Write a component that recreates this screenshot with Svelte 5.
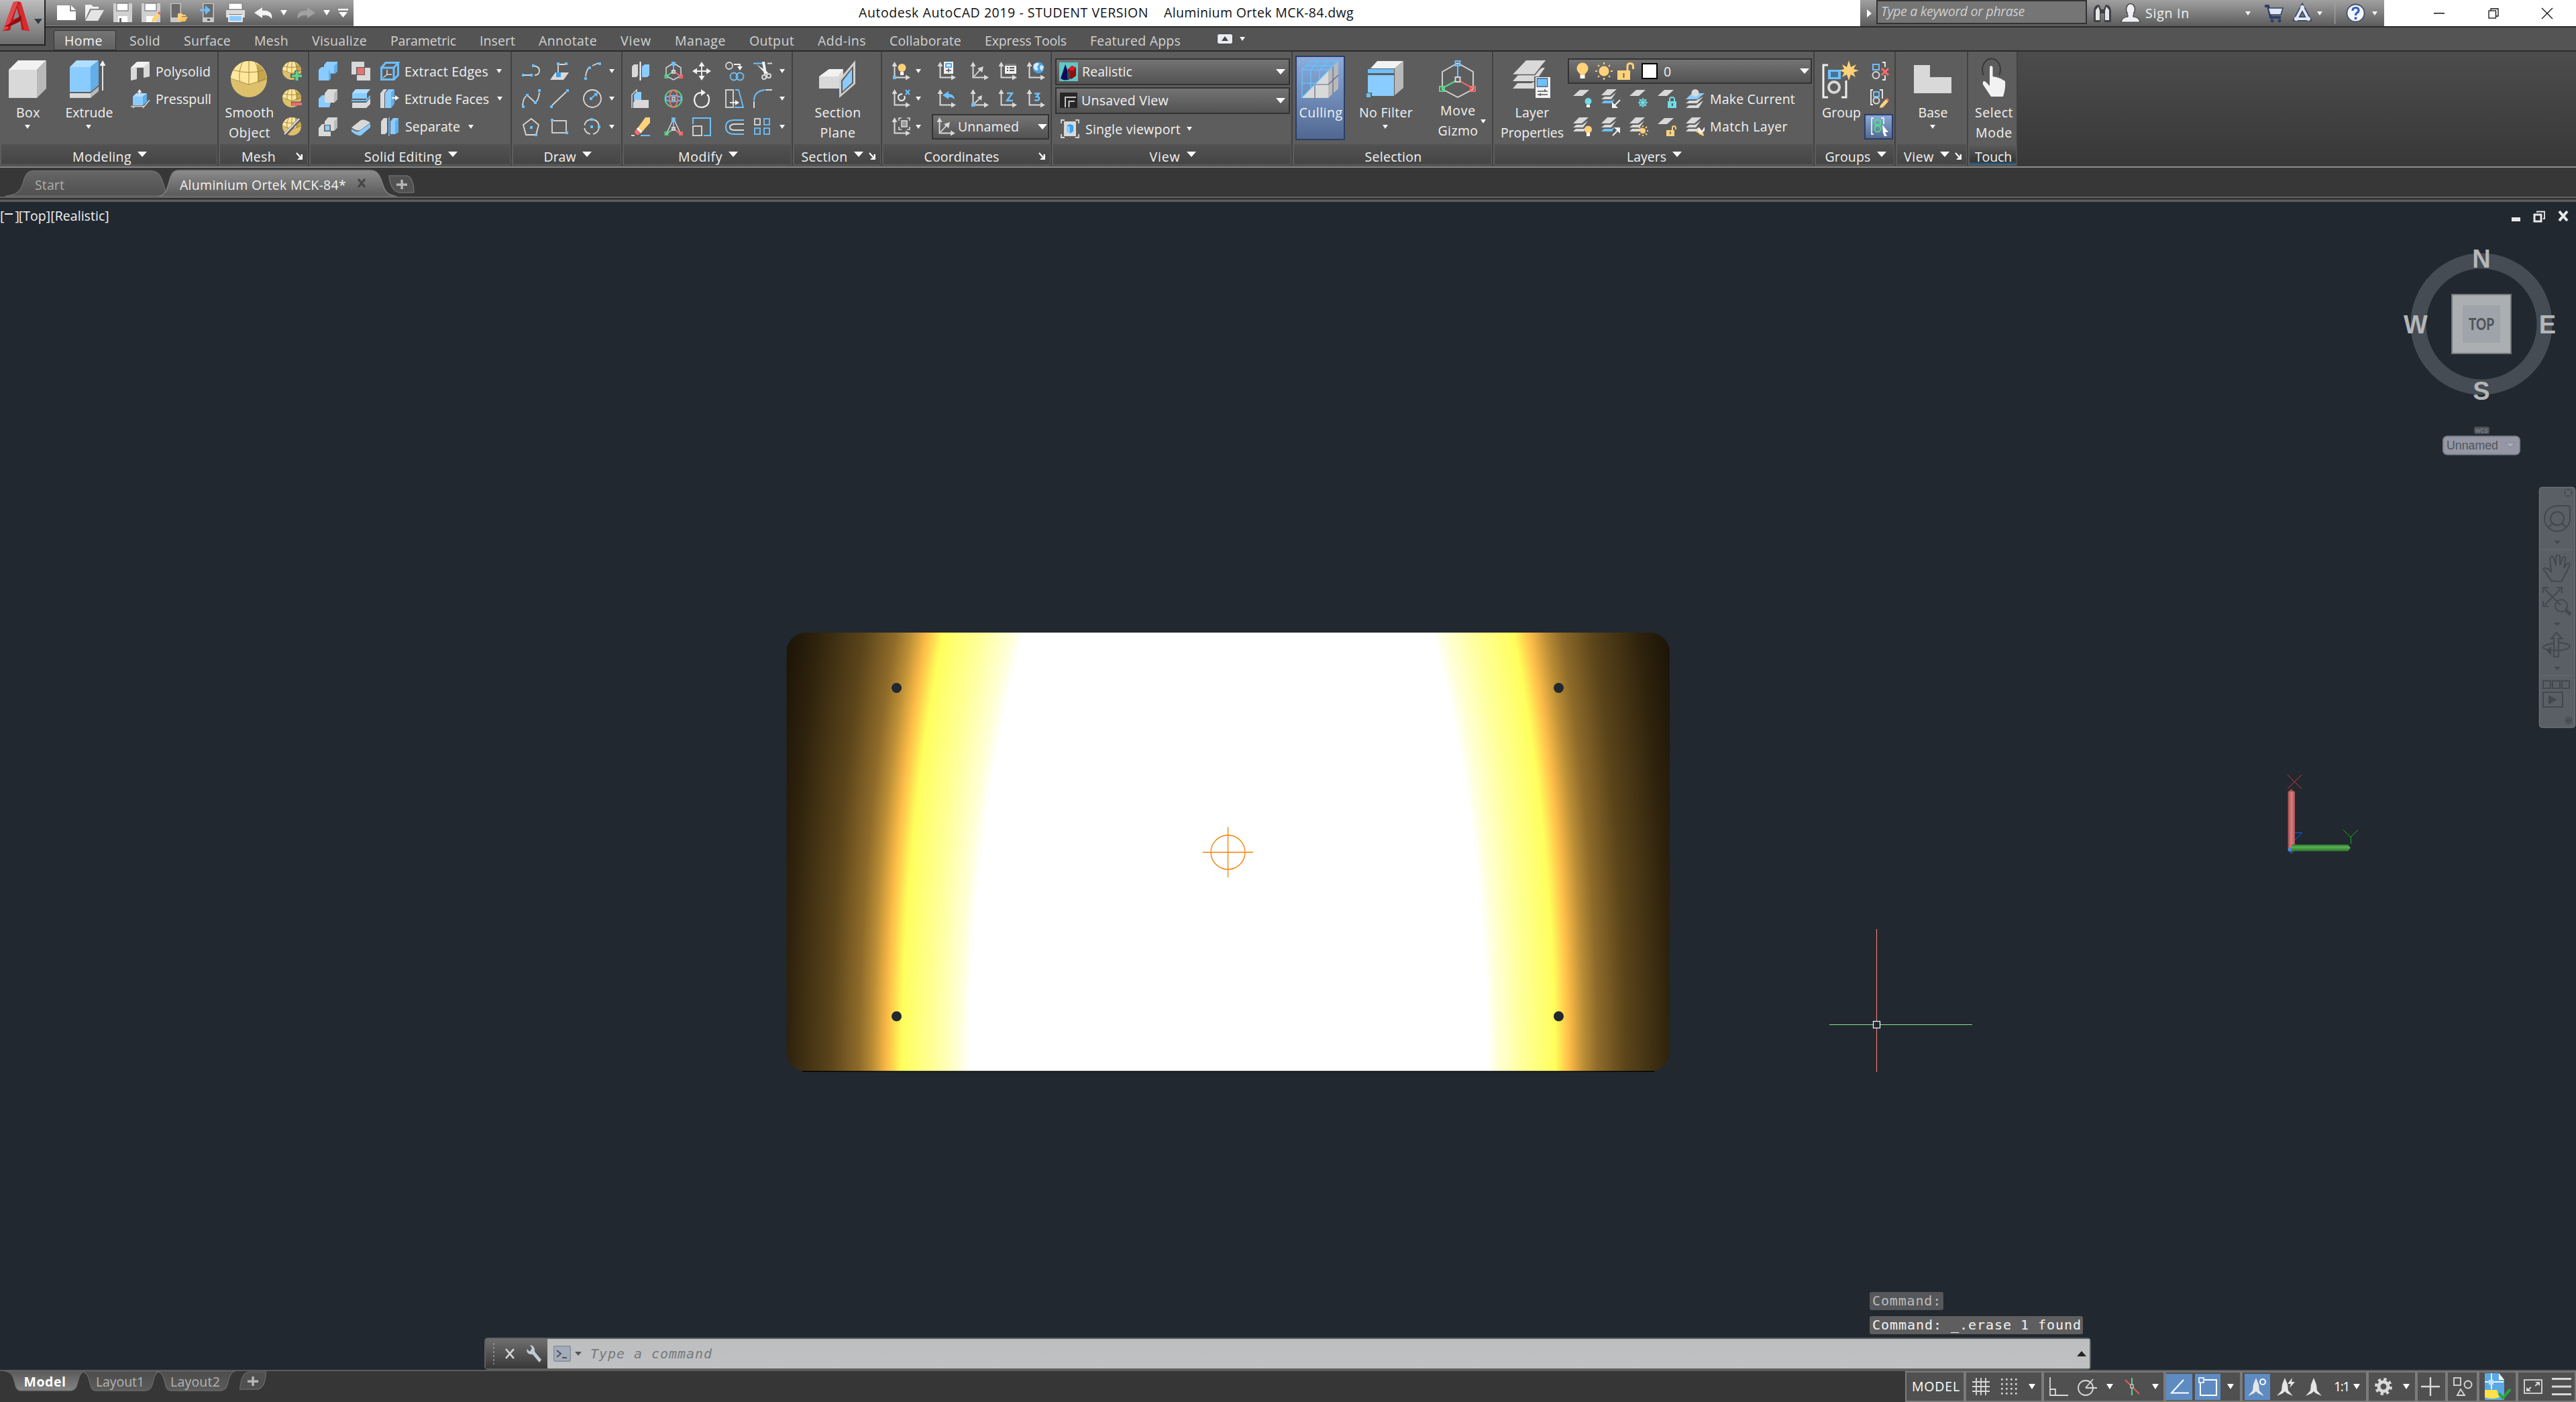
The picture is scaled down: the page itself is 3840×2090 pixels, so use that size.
<script>
  // ---------- drawing helpers ----------
  const P = (d, f) => `<path d="${d}" fill="${f}"/>`;
  const S = (d, s, w = 1.8) => `<path d="${d}" fill="none" stroke="${s}" stroke-width="${w}"/>`;
  const C = (x, y, r, f) => `<circle cx="${x}" cy="${y}" r="${r}" fill="${f}"/>`;
  const O = (x, y, r, s, w = 1.8) => `<circle cx="${x}" cy="${y}" r="${r}" fill="none" stroke="${s}" stroke-width="${w}"/>`;
  const R = (x, y, w, h, f) => `<rect x="${x}" y="${y}" width="${w}" height="${h}" fill="${f}"/>`;
  const Q = (x, y, w, h, s, sw = 1.8) => `<rect x="${x}" y="${y}" width="${w}" height="${h}" fill="none" stroke="${s}" stroke-width="${sw}"/>`;
  const dot = (x, y) => R(x - 2, y - 2, 4, 4, '#6cc0ff');

  const g = '#d9d9d9', wt = '#f2f2f2', dk = '#b9b9b9', b = '#8accff', lb = '#b0deff', db = '#62aee8';
  const l = '#6cc0ff', gr = '#58d888', rd = '#ff6b6b', ye = '#ffd27a', cy = '#6fdce6', bg = '#5d5d5d';

  const egg = (x, y, rx, ry) =>
    `<ellipse cx="${x}" cy="${y}" rx="${rx}" ry="${ry}" fill="#dcc06c"/>` +
    P(`M${x - rx} ${y}A${rx} ${ry} 0 0 1 ${x + rx} ${y}L${x} ${y + ry * 0.3}Z`, '#ffe79c') +
    P(`M${x + rx * 0.45} ${y - ry * 0.85}A${rx} ${ry} 0 0 1 ${x + rx} ${y}L${x + rx * 0.5} ${y + ry * 0.2}Z`, '#c4a64e') +
    S(`M${x - rx} ${y - 1}L${x} ${y + ry * 0.3}L${x + rx} ${y - 1}M${x - rx * 0.85} ${y - ry * 0.5}Q${x} ${y - ry * 0.25} ${x + rx * 0.85} ${y - ry * 0.5}M${x - rx * 0.35} ${y - ry * 0.95}Q${x - rx * 0.6} ${y - ry * 0.4} ${x - rx * 0.5} ${y + ry * 0.15}M${x + rx * 0.35} ${y - ry * 0.95}Q${x + rx * 0.6} ${y - ry * 0.4} ${x + rx * 0.5} ${y + ry * 0.15}M${x} ${y - ry}V${y + ry * 0.3}`, '#9c813a', 0.9);
  const axes = S('M4.5 5V23.5H23', g, 2) + P('M4.5 0L8.5 7H.5ZM28 23.5L21 19.5V27.5Z', g);
  const para = (x, y, f = g) => P(`M${x} ${y + 9}L${x + 10} ${y}H${x + 24}L${x + 14} ${y + 9}Z`, f);
  const sheets = (last) =>
    P('M0 21L4 17H16L20 14L16 21Z', last || g) + P('M0 15L5 11H14L22 5L15 15Z', g) + P('M0 9L9 0H23L13 9Z', g);
  const arrowA = P('M13 0L17 10L18 19L25 27L16 23L13 20L10 23L1 27L8 19L9 10Z', '#e6e6e6');

  // name: [width, height, markup]
  const icons = {
    tri: [8, 6, P('M0 0H8L4 6Z', '#f5f5f5')],
    triB: [14, 8, P('M0 0H14L7 8Z', '#fff')],
    triM: [10, 8, P('M0 0H10L5 8Z', '#fff')],
    triD: [10, 6, P('M0 0H10L5 6Z', '#555')],
    launch: [10, 11, S('M1 1L8 9', '#fff', 2) + P('M10 3V11H2L4.500 8.500H7.500V3Z', '#fff')],
    logo: [46, 52, P('M17 3Q24 -1 30 3L44 50L31 48L29 34L14 41L12 49L0 50Z', '#c4161c') + P('M23 12L17 31L27 27Z', '#888') + P('M17 3Q24 -1 25 3L8 46L0 50Z', '#e2474b') + P('M30 3L44 50L36 49L24 8Z', '#d92a30') + P('M2 43Q16 36 30 24L31 32Q18 40 10 42Z', '#8e0d12')],
    fnew: [28, 22, P('M0 0H19V9H28V22H0Z', '#fff') + P('M21 0L28 7H21Z', '#fff')],
    fopen: [28, 24, P('M0 0H9L12 3H20V6H7L0 22Z', '#f0f0f0') + P('M9 8H28L19 24H0Z', '#e4e4e4')],
    save: [28, 28, P('M0 0H28V28H0Z', '#d0d0d0') + R(5, 0, 17, 11, '#fff') + Q(5, 0, 17, 11, '#777', 1.2) + R(7, 19, 14, 9, '#fff') + R(9, 22, 3, 6, '#666')],
    saveas: [28, 28, P('M0 0H28V28H0Z', '#d0d0d0') + R(5, 0, 17, 11, '#fff') + Q(5, 0, 17, 11, '#777', 1.2) + R(7, 19, 14, 9, '#fff') + P('M16 22L24 14L28 18L20 27L15 28Z', ye) + P('M24 14L27 12L28 18Z', '#e5575c')],
    webopen: [27, 28, R(1, 0, 16, 28, '#c9c9c9') + R(2.500, 1, 13, 20, '#6a6a6a') + P('M12 27V15H18L20 17H24V19H18L14 27Z', ye) + P('M17 20H27L23 27H13Z', '#ffc25c')],
    websave: [22, 28, R(4, 0, 17, 28, '#c9c9c9') + R(5.500, 1, 14, 20, '#6a6a6a') + S('M0 10H11', l, 3) + P('M8 3L16 10L8 17Z', l) + R(11, 23, 4, 3, '#555')],
    print: [28, 28, R(4, 0, 20, 9, '#fff') + P('M0 10H28V21H24V16H4V21H0Z', '#dcdcdc') + Q(4, 0, 20, 9, '#777', 1) + R(4, 18, 20, 9, b) + Q(4, 18, 20, 9, '#fff', 1.5)],
    undo: [28, 17, P('M0 8L12 0V5C22 4 28 9 26 17C23 12 18 11 12 12V16Z', '#f3f3f3')],
    redo: [28, 17, P('M28 8L16 0V5C6 4 0 9 2 17C5 12 10 11 16 12V16Z', '#a2a2a2')],
    qmenu: [15, 13, R(0, 0, 15, 2.500, '#fff') + P('M1 5H14L7.500 13Z', '#fff')],
    triR: [7, 12, P('M0 0L7 6L0 12Z', '#fff')],
    binoc: [30, 28, P('M2 10Q3 1 10 1L13 8H17L20 1Q27 1 28 10V27H18V14H12V27H2Z', '#3d4046') + P('M5 9L9 4L11 10V24H5ZM25 9L21 4L19 10V24H25Z', '#e8e8e8')],
    user: [30, 29, `<ellipse cx="15" cy="9" rx="6.500" ry="8.500" fill="#eef0f4" stroke="#444" stroke-width="1.500"/>` + P('M11 15V20Q2 21 1 28H29Q28 21 19 20V15Z', '#eef0f4') + S('M11 17V20Q2 21 1 28H29Q28 21 19 20V17', '#444', 1.2)],
    cart: [28, 28, S('M0 3H5L9 20H24', '#2e3f66', 4) + P('M5 6H27L24 16H8Z', '#dfe6f5') + S('M5 6H27L24 16H8Z', '#2e3f66', 1.5) + C(11, 25, 2.5, '#2e3f66') + C(22, 25, 2.5, '#2e3f66')],
    a360: [28, 26, S('M14 4L5 21H23Z', '#2e3f66', 7) + S('M14 4L5 21H23Z', '#e2e8f4', 4) + C(14, 4, 3, '#e2e8f4') + C(5, 21, 3, '#e2e8f4') + C(23, 21, 3, '#e2e8f4')],
    help: [29, 29, C(14.5, 14.5, 13.5, '#f4f6fa') + O(14.5, 14.5, 13, '#444f66', 1.8) + S('M10 11Q10 6.500 14.500 6.500Q19 6.500 19 10.500Q19 13 16 14.500Q14.500 15.500 14.500 18', '#2b5fc4', 3.2) + R(12.8, 20.5, 3.5, 3.5, '#2b5fc4')],
    vsep: [2, 32, R(0, 0, 1.2, 32, '#a5a5a5')],
    wmin: [16, 2, R(0, 0, 16, 1.5, '#111')],
    wrest: [16, 16, Q(1, 4, 10.5, 11, '#111', 1.3) + S('M4 4V1H15V12H12', '#111', 1.3)],
    wclose: [16, 16, S('M0 0L16 16M16 0L0 16', '#111', 1.3)],
    ribtog: [24, 16, '<rect x=".5" y=".5" width="23" height="15" rx="3" fill="#e9ebf0" stroke="#3c4048"/>' + P('M7 11L12 4L17 11Z', '#444')],
    box: [56, 56, P('M0 14H42V56H0Z', g) + P('M0 14L14 0H56L42 14Z', wt) + P('M42 14L56 0V42L42 56Z', dk)],
    extrude: [56, 56, P('M0 10H31V47H0Z', b) + P('M0 10L10 0H43L31 10Z', lb) + P('M31 10L43 0V37L31 47Z', db) + R(0, 49, 31, 7, g) + P('M31 49L43 39V46L31 56Z', dk) + S('M49 5V45', wt, 1.8) + P('M49 0L53.500 8H44.500Z', wt)],
    smooth: [56, 56, egg(28, 28, 27, 27)],
    meshplus: [29, 28, egg(14, 13.5, 14, 13.5) + R(12, 18, 17, 6, bg) + R(18, 13, 6, 15, bg) + R(14, 19.3, 15, 3.6, gr) + R(19.5, 14, 4, 14, gr)],
    meshminus: [29, 28, egg(14, 13.5, 14, 13.5) + R(13, 18.5, 16, 6, bg) + R(14, 20, 15, 4, rd)],
    meshslash: [28, 28, egg(14, 13.5, 14, 13.5) + S('M4 26L25 3', bg, 5) + S('M3 25L25 2', g, 2.4)],
    polysolid: [28, 28, P('M0 9L9 0V22L0 28Z', wt) + P('M0 9L9 1L28 0V22L19 24V9L9 9V26L0 28Z', g) + P('M0 9L10 0H28L19 8H10Z', wt)],
    presspull: [28, 28, P('M3 11H18V24H3Z', b) + P('M3 11L8 6H24L18 11Z', lb) + P('M18 11L24 6V19L18 24Z', db) + S('M0 25.500H20L28 16M6 25L3 28M20 25L18 28', g, 1.5) + S('M13 2V8', wt, 1.5) + P('M13 0L16.500 5H9.500Z', wt)],
    union: [28, 28, P('M8 5L12 0H28V14L24 18H18V25L15 28H0V12L4 8H8Z', b) + P('M18 18L24 18L28 14V2L23 6V17H18V25L15 28V11Z', db)],
    interfere: [28, 28, R(0, 0, 19, 19, g) + R(8, 9, 20, 19, g) + R(7, 8, 13, 12, bg) + R(8.5, 9, 10.5, 10, '#e57373')],
    edges: [28, 28, S('M1.500 9H20V26.500H1.500ZM1.500 9L8 1.500H26.500L20 9M26.500 1.500V20L20 26.500', l, 3) + S('M10 12V19L4 24M10 19H17', g, 1.6)],
    subtract: [28, 28, P('M0 14L5 9H9V20H18L16 27H0Z', b) + P('M9 6L14 0H28V15L23 20H9Z', g) + P('M23 6L28 0V15L23 20Z', dk)],
    slice: [28, 28, P('M1 6L6 0H28L23 6V14H1Z', lb) + P('M1 6H23V14H1Z', b) + S('M0 17H22L28 10', l, 2) + P('M1 20H22L28 13V22L22 28H1Z', g)],
    extface: [28, 28, P('M0 6L5 0H10L6 6V28H0Z', g) + P('M7 6L12 0H21L16 6V28H7Z', b) + P('M16 6L21 0V22L16 28Z', db) + S('M17 13H24', wt, 2) + P('M22 9L28 13L22 17Z', wt)],
    intersect: [28, 28, P('M0 16L5 10H9V20H18L18 28H0Z', g) + P('M9 6L14 0H28V15L23 20H9Z', g) + P('M23 6L28 0V15L23 20Z', dk) + R(8, 11, 10, 10, bg) + R(9.5, 12, 7, 7.5, b)],
    thicken: [28, 28, P('M0 15L14 4Q20 2 28 8L16 17Q10 23 0 15Z', g) + P('M0 17Q8 24 14 19L28 9V15L14 27Q8 28 0 21Z', b)],
    separate: [26, 28, P('M0 6L4 1H9V22L6 25H0Z', g) + P('M14 6L18 1H26V22L21 25H14Z', b) + P('M21 6L26 1V21L21 25Z', db) + S('M12 0V28', l, 1.6)],
    pline: [28, 28, S('M2 20H12M17 6Q26 7 26 13Q26 20 19 20', g) + dot(2, 20) + dot(14, 20) + dot(17, 6)],
    helix: [28, 28, P('M0 27L8 16H28L20 27Z', g) + S('M12 18V4H22', g) + dot(12, 3) + dot(24, 3) + R(9, 16, 7, 7, '#3aa0ef')],
    arc: [28, 28, S('M3 22Q4 12 9 8M13 6L22 2', g) + dot(3, 25) + dot(9, 9) + dot(24, 3)],
    spline: [28, 28, S('M1 24Q2 12 8 9M8 9L20 20M20 20Q25 16 26 5', g) + dot(2, 26) + dot(8, 9) + dot(20, 20) + dot(26, 2)],
    line: [28, 28, S('M3 24L24 4', g) + dot(2, 26) + dot(26, 2)],
    circ: [28, 28, O(14, 14, 13, g) + dot(12, 14) + S('M13 13L20 7', l, 1.8) + P('M22 5L21 11L16 6Z', l)],
    polygon: [28, 28, S('M14 2L25 11L21 26H6L2 11Z', g) + dot(14, 15) + dot(21, 26)],
    rect: [28, 28, Q(3, 5, 21, 18, g) + dot(3, 4) + dot(25, 23)],
    ellip: [28, 28, `<circle cx="14" cy="14" r="11" fill="none" stroke="${g}" stroke-width="1.8" stroke-dasharray="13 4.300" stroke-dashoffset="-2"/>` + dot(14, 3) + dot(14, 14) + dot(25, 14)],
    mirror: [28, 28, P('M1 7L4 4H10V20L8 23H1Z', g) + P('M16 7L20 4H27V20L24 23H16Z', b) + R(12.5, 0, 2, 28, '#fff')],
    gizmo: [28, 28, S('M14 2L25 9V21L14 27L3 21V9Z', g, 1.5) + S('M14 2V14', l) + S('M3 22L14 14', gr) + S('M14 14L25 22', rd) + Q(12, 1, 4, 4, l) + Q(12, 13, 4, 4, g) + Q(1.5, 20, 4, 4, gr) + Q(23, 20, 4, 4, rd)],
    move: [28, 28, S('M14 4V24M4 14H24', wt, 1.8) + P('M14 0L18.500 7H9.500ZM14 28L18.500 21H9.500ZM0 14L7 9.500V18.500ZM28 14L21 9.500V18.500Z', wt)],
    copy: [28, 28, O(6, 6, 5, g) + S('M13 4H22V9', wt) + P('M22 13L26 7H18Z', wt) + O(13, 22, 5.5, l) + O(22, 22, 5.5, l)],
    trim: [28, 28, S('M0 2.500H17', l, 2) + S('M21 2.500H28', g, 2) + P('M13 0H17L20 18L16 19ZM5 4L22 16L19 19Z', wt) + O(16, 23, 3, g, 2) + O(23, 21, 3, g, 2)],
    align3: [28, 28, S('M1 28V8L8 1V4', g, 1.5) + P('M4 8L8 4H15V17H4Z', b) + P('M3 20L6 16H26V28H3Z', g)],
    rot3: [28, 28, O(14, 14, 12.5, gr, 2) + `<ellipse cx="14" cy="14" rx="12" ry="4.500" fill="none" stroke="${l}" stroke-width="2"/><ellipse cx="14" cy="14" rx="6" ry="12.500" fill="none" stroke="${rd}" stroke-width="2"/>` + Q(12, 12, 4, 4, g, 1.5)],
    rotate: [28, 28, S('M14 5Q4 5 3 16Q4 27 14 27Q25 26 25 15Q25 10 22 8', wt, 2.2) + P('M13 0L20 5L13 10Z', wt)],
    stretch: [28, 28, Q(1, 1, 11, 26, g) + S('M15 1H20L27 27H14', l) + S('M7 20H18', wt) + P('M15 16L21 20L15 24Z', wt)],
    fillet: [28, 28, S('M1 17Q1 3 17 1', l, 2) + S('M18 1H28M1 18V28', g, 2)],
    erase: [28, 28, P('M8 18L21 0H28V8L14 24Z', ye) + P('M5 21L8 17L14 23L11 26Q6 27 5 21Z', rd) + P('M8 17L10 15L16 21L14 23Z', '#fff') + R(0, 26, 5, 2, g) + R(14, 26, 14, 2, l)],
    scale3: [28, 28, S('M14 2L3 25L14 17L25 25Z', g, 1.5) + S('M14 2V17', l) + S('M3 25L14 17', gr) + S('M14 17L25 25', rd) + Q(12, 1, 4, 4, l) + Q(12, 15, 4, 4, g) + Q(1.5, 22, 4, 4, gr) + Q(23, 22, 4, 4, rd)],
    scale: [28, 28, S('M1 10V1H27V27H17', l, 2) + Q(1, 13, 13, 14, g)],
    offset: [28, 28, S('M28 4H14Q1 4 1 14Q1 25 14 25H28', l, 2) + S('M28 10H15Q7 10 7 14.500Q7 19 15 19H28', g, 2)],
    array: [28, 28, Q(2, 2, 8, 9, g) + Q(16, 2, 8, 9, l) + Q(2, 16, 8, 9, l) + Q(16, 16, 8, 9, l)],
    section: [54, 56, P('M0 24L15 13H36V42H0Z', g) + P('M0 24L15 13H36L28 24Z', wt) + P('M30 28L54 0V35L30 56Z', '#cfcfcf') + P('M33 30L51 8V34L33 50Z', bg) + P('M35 31L49 13V33L35 46Z', b)],
    ucs1: [28, 28, axes + C(15.5, 9, 6, ye) + R(13, 15, 5, 5, '#fff') + R(2, 21, 5, 5, l)],
    ucs2: [28, 28, axes + R(10, 0, 14, 18, '#f0f0f0') + Q(13, 3, 8, 5, '#3aa0ef') + S('M13 13H21M17 10V16', '#555', 1.5)],
    ucs3: [28, 28, axes + S('M6 22L15 12', g) + P('M20 7L18 16L11 10Z', g)],
    ucs4: [28, 28, axes + R(10, 3, 17, 15, '#f0f0f0') + R(10, 3, 17, 3, '#777') + S('M13 9H15M17 9H24M13 13H15M17 13H24', '#555', 2)],
    ucs5: [28, 28, axes + C(18, 9, 8.5, '#4aa3e0') + P('M11 4Q16 0 19 3L16 8L18 12L14 13Q9 9 11 4ZM21 5L26 7L23 14L20 10Z', '#d5ecff')],
    ucs6: [28, 28, axes + S('M16 7Q9 8 10 13Q12 19 18 16Q21 13 19 10', wt, 2) + S('M21 1L27 8M27 1L21 8', l, 2)],
    ucs7: [28, 28, axes + P('M8 9L17 3V7Q25 7 26 15Q21 11 17 12V15Z', l)],
    ucs8: [28, 28, axes + S('M6 22L15 13', g) + P('M18 9L17 17L11 12Z', g) + R(2, 21, 5, 5, l)],
    ucs9: [28, 28, axes + S('M13 6H21L13 17H22', l, 2.4)],
    ucs10: [28, 28, axes + S('M12 6.500H19L15 11Q20 11 19 15Q17 18 12 16', l, 2.4)],
    ucs11: [28, 28, axes + R(15, 5, 8, 9, '#9a9a9a') + Q(15, 5, 8, 9, g, 1.5) + S('M11 5V1H15M23 1H27V5M27 14V18H23M15 18H11V14', g, 1.6)],
    realistic: [28, 28, R(0, 0, 28, 28, '#5ec8c4') + P('M9 3L17 24Q9 29 2 24Z', '#0b0b5e') + P('M13 10L19 5L25 8V20L18 25L13 20Z', '#8c0f12') + P('M13 10L19 5L25 8L20 13Z', '#e0191f') + R(12, 13, 4, 12, '#3c4a46')],
    viewic: [26, 23, R(0, 0, 26, 23, '#262626') + S('M8 22V7H24M13.500 22V13H22', '#c8c8c8', 2)],
    viewport: [28, 28, S('M1 6V1H6M22 1H27V6M27 22V27H22M6 27H1V22', g, 1.8) + R(5, 3, 18, 22, g) + P('M9 9L14 7L19 9V18L14 21L9 18Z', '#3aa0ef') + P('M9 9L14 11V21L9 18Z', b)],
    culling: [56, 56, P('M0 56L40 15V56Z', g) + P('M40 15L55 0V42L40 56Z', dk) + S('M20 36V56M20 36H40M47 8V50M40 36L55 22', '#5a6a8a', 1.2) + S('M1 56V14L14 1H54L40 14H1M0 56L54 1M1 34H20M14 14L26 1M27 14L40 1M14 42V14M27 28V14M8 8H47', '#62c3ff', 1.4)],
    nofilter: [56, 56, P('M6 12L16 1H55L42 12Z', wt) + P('M42 12L55 1V41L42 52Z', dk) + R(2, 13, 39, 6, l) + R(2, 22, 39, 31, b) + R(0, 48, 8, 8, bg) + R(0, 49, 6, 6, l)],
    gizmoB: [56, 56, S('M28 4L51 17V43L28 55L5 43V17Z', g, 1.8) + S('M28 5V29', l, 2) + S('M4 42L28 29', gr, 2) + S('M28 29L51 42', rd, 2) + R(24, 24, 8, 8, bg) + Q(24.5, 1, 7, 7, l, 2) + Q(24.5, 25, 7, 7, g, 2) + Q(1, 39, 7, 7, gr, 2) + Q(47, 39, 7, 7, rd, 2)],
    layers: [56, 56, P('M0 42L7 34H28L40 24V42Z', g) + P('M0 31L8 22H28L44 11H48L34 31Z', g) + P('M0 21L20 0H49L33 21Z', g) + S('M0 21.500H33L46 5M0 31.800H32', bg, 1.6) + R(32, 24, 24, 32, bg) + R(34, 25, 22, 31, '#f2f2f2') + Q(36.5, 27, 15, 12, '#4a7296') + R(37.5, 28, 13, 10, l) + S('M37 46H52M37 51H52M48 43V47M41 49V53', '#555', 1.5)],
    bulb: [18, 26, C(9, 9, 8.5, ye) + P('M3 14H15L12 19H6Z', ye) + R(5.5, 19, 7, 5, '#fff')],
    sun: [26, 26, C(13, 13, 7.5, ye) + S('M13 0V3M13 23V26M0 13H3M23 13H26M4 4L6 6M22 4L20 6M4 22L6 20M22 22L20 20', ye, 2)],
    lock: [25, 26, R(0, 12, 19, 14, ye) + S('M15 12V6Q15 1.500 19 1.500Q23.500 1.500 23.500 6V10', ye, 3) + R(8.5, 16, 2, 7, '#666')],
    swatch: [24, 24, R(0, 0, 24, 24, '#000') + R(2, 2, 20, 20, '#fff')],
    lay1: [28, 28, para(0, 1) + C(22.5, 18, 5, cy) + R(20, 23, 5, 4, '#fff')],
    lay2: [28, 28, sheets(l) + S('M28 16L20 24', wt, 2) + P('M16 28V19L25 28Z', wt)],
    lay3: [28, 28, para(0, 1) + S('M20 13V27M13 20H27M15 15L25 25M25 15L15 25', cy, 1.7) + O(20, 20, 5, cy, 1.2)],
    lay4: [28, 28, para(0, 1) + R(15, 18, 13, 10, cy) + S('M18 18V15Q18 12 21.500 12Q25 12 25 15V18', cy, 2) + R(21, 21, 1.5, 4, '#333')],
    lay5: [28, 28, P('M0 28L5 24H15L26 17L19 28Z', g) + P('M0 21L5 17H15L26 11L17 21Z', g) + P('M0 15L9 6H28L17 15Z', b) + C(14, 5.5, 5.5, g)],
    lay6: [28, 28, sheets() + C(22.5, 18, 5.5, ye) + R(20, 23, 5, 5, '#fff')],
    lay7: [28, 28, sheets(l) + S('M17 27L25 19', wt, 2) + P('M28 15V24L19 15Z', wt)],
    lay8: [28, 28, sheets() + C(20, 20, 4, ye) + S('M20 12V14M20 26V28M12 20H14M26 20H28M14 14L16 16M26 14L24 16M14 26L16 24M26 26L24 24', ye, 2)],
    lay9: [28, 28, para(0, 1) + R(13, 19, 12, 9, ye) + S('M22 19V16Q22 13 24.500 13Q27.500 13 27 18', ye, 2) + R(18, 21, 1.5, 4, '#555')],
    lay10: [28, 28, sheets() + P('M15 21L22 26L27 28L26 23L19 18Z', ye) + P('M17 18L20 15L24 20L28 14V20L22 24Z', wt)],
    group: [56, 56, S('M9 7H2V55H9M29 55H36V30', '#eee', 3) + R(9, 14, 19, 14, l) + R(13, 17, 11, 8, '#4a7296') + O(18, 40, 8, g, 4) + P('M40 0L43 10L51 6L47 13L55 15L47 18L50 25L43 21L40 30L37 21L30 25L33 18L26 15L33 13L30 6L37 10Z', ye)],
    grp1: [28, 28, S('M16 1H20V8M20 20V27H16', '#eee') + Q(2, 4, 9, 8, l, 2) + O(6.5, 20, 5, g, 2) + S('M15 10L25 20M25 10L15 20', rd, 3)],
    grp2: [28, 28, S('M4 1H1V23H4M14 1H18V14', '#eee') + Q(5, 4, 8, 7, l, 2) + O(9, 17, 4.5, g, 2) + P('M15 24L23 15L27 18L19 27L14 28Z', ye) + P('M23 15L25 13L28 16L27 18Z', rd)],
    grp3: [28, 28, S('M4 1H1V25H4M15 1H19V10', '#eee') + Q(6, 4, 8, 7, gr, 2) + O(10, 17, 4.5, gr, 2) + P('M17 11L26 22H21L24 28H20L18 23Z', '#fff')],
    base: [56, 42, P('M0 0H24V18H56V42H0Z', g)],
    touch: [36, 56, S('M3 22A13.500 16 0 1 1 26 22', '#3a3a3a', 2) + P('M12 10Q14 6 16.500 10V24L22 25L28 27L35 31Q36 42 32 54H14L2 36Q1 29 6 32L12 38Z', '#f2f2f2')],
    close: [12, 14, S('M1 1L11 13M11 1L1 13', '#454545', 3)],
    plus: [16, 14, R(0, 5.5, 16, 3.5, '#b5b5b5') + R(6.3, 0, 3.5, 14, '#b5b5b5')],
    cx: [16, 16, S('M2 1L14 15M14 1L2 15', '#d5d5d5', 2.6)],
    grip: [2, 32, `<path d="M1 0V32" stroke="#9a9a9a" stroke-width="1.500" stroke-dasharray="3 3"/>`],
    wrench: [24, 26, P('M2 6L7 10L10 5L7 0Q15 1 14 10L24 22L21 26L11 14Q2 15 2 6Z', '#c3cbd6')],
    prompt: [26, 24, '<rect x=".700" y=".700" width="24.600" height="22.600" rx="2" fill="#a5adba" stroke="#858c98" stroke-width="1.400"/>' + S('M5 7L11 12L5 17M13 18H20', '#4a5160', 2)],
    up: [14, 8, P('M0 8L7 0L14 8Z', '#222')],
    sgrid: [26, 26, S('M6 0V26M13 0V26M20 0V26M0 6H26M0 13H26M0 20H26', g, 1.8)],
    sdots: [24, 24, [1, 8, 15, 22].map((y) => [1, 8, 15, 22].map((x) => R(x - 1, y - 1, 2.6, 2.6, g)).join('')).join('')],
    sortho: [28, 28, S('M1 0V27H28M1 18H9V27', g, 1.8)],
    spolar: [30, 26, O(13, 15, 11, g) + S('M13 15L24 2M13 15H30', g, 1.8)],
    siso: [24, 26, S('M11 0V26', gr, 2) + S('M1 3L22 24', '#e05a5a', 2.2) + R(9, 10, 4, 5, '#505050') + Q(9, 10, 4, 5, g, 1.2)],
    sangle: [28, 24, S('M21 2L3 21.500H29', '#fff', 2)],
    ssnap: [28, 28, S('M9 4H27V27H3V9', '#fff', 2) + Q(1, 1, 7, 7, '#fff', 1.6)],
    ann1: [29, 27, arrowA + O(23, 6, 4, '#fff', 2)],
    ann2: [29, 27, arrowA + P('M24 0L17 9H22L20 15L28 6H23Z', '#e6e6e6')],
    ann3: [26, 27, arrowA],
    gear: [26, 26, `<circle cx="13" cy="13" r="7" fill="none" stroke="${g}" stroke-width="5"/><circle cx="13" cy="13" r="11" fill="none" stroke="${g}" stroke-width="4" stroke-dasharray="4.300 4.340"/>`],
    splus: [28, 28, S('M14 0V28M0 14H28', g, 2.4)],
    sshape: [29, 28, Q(1, 1, 10, 11, g) + O(22, 11, 5.5, g) + S('M11 18L17 27H6Z', g)],
    badge: [40, 40, P('M0 0H21L29 10V40H0Z', '#5aa9e6') + P('M21 0L29 10H21Z', '#fff') + S('M10 0V24M0 13H28', '#e8f4ff', 2) + R(6, 10, 7, 7, '#bfe0ff') + P('M0 25H18L22 36Q10 40 0 36Z', '#ffe24a') + S('M21 30L27 37L38 24', '#27a844', 4)],
    sfull: [28, 22, Q(1, 1, 26, 20, g) + S('M5 17L11 12M23 5L17 10', g, 2) + P('M4 12V18H11ZM24 10V4H17Z', g)],
    smenu: [29, 26, R(0, 0, 29, 3, g) + R(0, 11.5, 29, 3, g) + R(0, 23, 29, 3, g)],
    dmin: [13, 6, R(0, 0, 13, 6, '#e8e8e8')],
    drest: [18, 18, S('M2 6H12V16H2Z', '#e8e8e8', 3) + S('M6 3V1.500H17V12H15', '#e8e8e8', 1.8)],
    dclose: [16, 16, S('M2 1L14 15M14 1L2 15', '#e8e8e8', 4)]
  };

  // ---------- content ----------
  // item: ['i', x, icon] | ['t', x, text, width, class] | ['b', x, width, height, class, items]
  const quick = [['i', 85, 'fnew'], ['i', 127, 'fopen'], ['i', 169, 'save'], ['i', 211, 'saveas'], ['i', 253, 'webopen'], ['i', 298, 'websave'], ['i', 337, 'print'], ['i', 379, 'undo'], ['i', 418, 'triM'], ['i', 442, 'redo'], ['i', 482, 'triM'], ['i', 504, 'qmenu']];
  const info = [['i', 2783, 'triR'], ['b', 2797, 314, 36, 'search', [['t', 2804, 'Type a keyword or phrase', 212, 'ital']]], ['i', 3119, 'binoc'], ['i', 3161, 'user'], ['t', 3198, 'Sign In', 64], ['i', 3347, 'tri'], ['i', 3376, 'cart'], ['i', 3418, 'a360'], ['i', 3454, 'tri'], ['i', 3480, 'vsep'], ['i', 3497, 'help'], ['i', 3536, 'tri']];
  const wins = [['i', 3628, 'wmin'], ['i', 3709, 'wrest'], ['i', 3789, 'wclose']];
  const tabs = [['Solid', 44], ['Surface', 68], ['Mesh', 49], ['Visualize', 80], ['Parametric', 96], ['Insert', 51], ['Annotate', 85], ['View', 44], ['Manage', 74], ['Output', 65], ['Add-ins', 70], ['Collaborate', 105], ['Express Tools', 120], ['Featured Apps', 133]];

  const T = (x) => ['i', x, 'tri'];
  const panels = [
    { x: 0, e: 326, title: 'Modeling', tw: 86, tri: 1, rx: 195,
      bigs: [{ x: 13, w: 56, icon: 'box', lines: [['Box', 34]], tri: 1 }, { x: 97, w: 70, icon: 'extrude', lines: [['Extrude', 69]], tri: 1 }],
      rows: [[['i', 195, 'polysolid'], ['t', 232, 'Polysolid', 80]], [['i', 195, 'presspull'], ['t', 232, 'Presspull', 81]]] },
    { x: 326, e: 461, title: 'Mesh', tw: 49, launch: 1, rx: 421,
      bigs: [{ x: 335, w: 72, icon: 'smooth', lines: [['Smooth', 71], ['Object', 60]] }],
      rows: [[['i', 421, 'meshplus']], [['i', 421, 'meshminus']], [['i', 421, 'meshslash']]] },
    { x: 461, e: 763, title: 'Solid Editing', tw: 114, tri: 1, rx: 475, bigs: [],
      rows: [[['i', 475, 'union'], ['i', 524, 'interfere'], ['i', 567, 'edges'], ['t', 603, 'Extract Edges', 123], T(740)],
        [['i', 475, 'subtract'], ['i', 524, 'slice'], ['i', 567, 'extface'], ['t', 603, 'Extrude Faces', 124], T(741)],
        [['i', 475, 'intersect'], ['i', 524, 'thicken'], ['i', 568, 'separate'], ['t', 604, 'Separate', 80], T(698)]] },
    { x: 763, e: 928, title: 'Draw', tw: 46, tri: 1, rx: 778, bigs: [],
      rows: [[['i', 778, 'pline'], ['i', 820, 'helix'], ['i', 870, 'arc'], T(908)], [['i', 778, 'spline'], ['i', 820, 'line'], ['i', 869, 'circ'], T(908)], [['i', 778, 'polygon'], ['i', 820, 'rect'], ['i', 868, 'ellip'], T(908)]] },
    { x: 928, e: 1182, title: 'Modify', tw: 64, tri: 1, rx: 941, bigs: [],
      rows: [[['i', 941, 'mirror'], ['i', 990, 'gizmo'], ['i', 1032, 'move'], ['i', 1081, 'copy'], ['i', 1123, 'trim'], T(1162)],
        [['i', 941, 'align3'], ['i', 990, 'rot3'], ['i', 1032, 'rotate'], ['i', 1081, 'stretch'], ['i', 1123, 'fillet'], T(1162)],
        [['i', 941, 'erase'], ['i', 990, 'scale3'], ['i', 1032, 'scale'], ['i', 1081, 'offset'], ['i', 1123, 'array'], T(1162)]] },
    { x: 1182, e: 1315, title: 'Section', tw: 67, tri: 1, launch: 1, rx: 1300,
      bigs: [{ x: 1214, w: 68, icon: 'section', lines: [['Section', 67], ['Plane', 51]] }], rows: [] },
    { x: 1315, e: 1568, title: 'Coordinates', tw: 110, launch: 1, rx: 1329, bigs: [],
      rows: [[['i', 1329, 'ucs1'], T(1365), ['i', 1397, 'ucs2'], ['i', 1446, 'ucs3'], ['i', 1488, 'ucs4'], ['i', 1530, 'ucs5']],
        [['i', 1329, 'ucs6'], T(1365), ['i', 1397, 'ucs7'], ['i', 1446, 'ucs8'], ['i', 1488, 'ucs9'], ['i', 1530, 'ucs10']],
        [['i', 1329, 'ucs11'], T(1365), ['b', 1389, 175, 38, 'combo', [['i', 1396, 'ucs3'], ['t', 1428, 'Unnamed', 89], ['i', 1547, 'triB']]]]] },
    { x: 1568, e: 1927, title: 'View', tw: 44, tri: 1, rx: 1573, pitch: 42.8, bigs: [],
      rows: [[['b', 1573, 350, 40, 'combo', [['i', 1579, 'realistic'], ['t', 1613, 'Realistic', 73], ['i', 1902, 'triB']]]],
        [['b', 1573, 350, 40, 'combo', [['i', 1580, 'viewic'], ['t', 1612, 'Unsaved View', 128], ['i', 1902, 'triB']]]],
        [['i', 1581, 'viewport'], ['t', 1618, 'Single viewport', 140], T(1769)]] },
    { x: 1927, e: 2226, title: 'Selection', tw: 83, rx: 2224,
      bigs: [{ x: 1931, w: 74, icon: 'culling', lines: [['Culling', 63]], on: 1 }, { x: 2025, w: 80, icon: 'nofilter', lines: [['No Filter', 78]], tri: 1 }, { x: 2143, w: 59, icon: 'gizmoB', lines: [['Move', 51], ['Gizmo', 58]], tight: 1 }, { x: 2207, w: 8, side: 1 }], rows: [] },
    { x: 2226, e: 2705, title: 'Layers', tw: 57, tri: 1, rx: 2337,
      bigs: [{ x: 2237, w: 92, icon: 'layers', lines: [['Layer', 49], ['Properties', 92]] }],
      rows: [[['b', 2337, 364, 38, 'combo', [['i', 2350, 'bulb'], ['i', 2378, 'sun'], ['i', 2411, 'lock'], ['i', 2447, 'swatch'], ['t', 2480, '0', 11], ['i', 2683, 'triB']]]],
        [['i', 2345, 'lay1'], ['i', 2387, 'lay2'], ['i', 2429, 'lay3'], ['i', 2471, 'lay4'], ['i', 2513, 'lay5'], ['t', 2549, 'Make Current', 125]],
        [['i', 2345, 'lay6'], ['i', 2387, 'lay7'], ['i', 2429, 'lay8'], ['i', 2471, 'lay9'], ['i', 2513, 'lay10'], ['t', 2549, 'Match Layer', 114]]] },
    { x: 2705, e: 2826, title: 'Groups', tw: 66, tri: 1, rx: 2779,
      bigs: [{ x: 2715, w: 58, icon: 'group', lines: [['Group', 56]] }],
      rows: [[['i', 2790, 'grp1']], [['i', 2788, 'grp2']], [['b', 2779, 43, 38, 'on', [['i', 2789, 'grp3']]]]] },
    { x: 2826, e: 2934, title: 'View', tw: 43, tri: 1, launch: 1, rx: 2930,
      bigs: [{ x: 2852, w: 57, icon: 'base', lines: [['Base', 42]], tri: 1 }], rows: [] },
    { x: 2934, e: 3008, title: 'Touch', tw: 53, rx: 3006, touch: 1,
      bigs: [{ x: 2944, w: 55, icon: 'touch', lines: [['Select', 55], ['Mode', 53]] }], rows: [] }
  ];

  const layouts = [
    { label: 'Model', tw: 61, on: 1 },
    { label: 'Layout1', tw: 70 },
    { label: 'Layout2', tw: 72 }
  ];

  const M = (x) => ['i', x, 'triM'];
  const status = [
    { x: 2840, e: 2929, items: [['t', 2850, 'MODEL', 70, 'bright']] },
    { x: 2929, e: 3045, items: [['i', 2940, 'sgrid'], ['i', 2983, 'sdots'], M(3024)] },
    { x: 3045, e: 3227, items: [['i', 3055, 'sortho'], ['i', 3096, 'spolar'], M(3140), ['i', 3167, 'siso'], M(3208)] },
    { x: 3227, e: 3341, items: [['b', 3229, 39, 39, 'lit', [['i', 3234, 'sangle']]], ['b', 3272, 38, 39, 'lit', [['i', 3277, 'ssnap']]], M(3320)] },
    { x: 3341, e: 3529, items: [['b', 3346, 38, 39, 'lit', [['i', 3350, 'ann1']]], ['i', 3393, 'ann2'], ['i', 3436, 'ann3'], ['t', 3479, '1:1', 21, 'bright'], M(3508)] },
    { x: 3529, e: 3602, items: [['i', 3540, 'gear'], M(3582)] },
    { x: 3602, e: 3647, items: [['i', 3609, 'splus']] },
    { x: 3647, e: 3694, items: [['i', 3657, 'sshape']] },
    { x: 3694, e: 3752, items: [['i', 3704, 'badge']] },
    { x: 3752, e: 3840, items: [['i', 3762, 'sfull'], ['i', 3804, 'smenu']] }
  ];

  const cols = (xs) => xs.map((x, i) => (i < xs.length - 1 ? `${xs[i + 1] - x}px` : 'max-content')).join(' ');

  // Tracks a label so that it fills its measured width.
  function fit(node, width) {
    const natural = node.getBoundingClientRect().width;
    node.style.letterSpacing = `${(width + 2 - natural) / node.textContent.length}px`;
  }
</script>

{#snippet icon(name)}
  <svg class="ic" width={icons[name][0]} height={icons[name][1]} viewBox="0 0 {icons[name][0]} {icons[name][1]}">{@html icons[name][2]}</svg>
{/snippet}

{#snippet label(text, width, cls = '')}
  <span class="label {cls}" use:fit={width}>{text}</span>
{/snippet}

{#snippet strip(items, start)}
  <div class="strip" style:padding-left="{items[0][1] - start}px" style:grid-template-columns={cols(items.map((i) => i[1]))}>
    {#each items as it}
      {#if it[0] === 'i'}
        {@render icon(it[2])}
      {:else if it[0] === 't'}
        {@render label(it[2], it[3], it[4])}
      {:else}
        <div class="cell {it[4]}" style:width="{it[2]}px" style:height="{it[3]}px">{@render strip(it[5], it[1])}</div>
      {/if}
    {/each}
  </div>
{/snippet}

<div class="app">
  <header class="titlebar">
    <div class="quick">{@render strip(quick, 68)}</div>
    <div class="doc">
      {@render label('Autodesk AutoCAD 2019 - STUDENT VERSION', 430, 'dark')}
      {@render label('Aluminium Ortek MCK-84.dwg', 281, 'dark')}
    </div>
    <div class="info">{@render strip(info, 2773)}</div>
    <div class="wins">{@render strip(wins, 3554)}</div>
  </header>
  <div class="logo">{@render icon('logo')}<svg class="ic" width="12" height="8" viewBox="0 0 12 8"><path d="M0 0H12L6 8Z" fill="#333b46" /></svg></div>

  <nav class="tabs">
    <div class="tab home">{@render label('Home', 55)}</div>
    {#each tabs as [name, w]}
      <div class="tab">{@render label(name, w)}</div>
    {/each}
    <div class="toggle">{@render icon('ribtog')}{@render icon('tri')}</div>
  </nav>

  <section class="ribbon">
    {#each panels as p}
      <div class="panel" class:touch={p.touch} style:width="{p.e - p.x}px">
        <div class="body" style:padding-left="{(p.bigs[0]?.x ?? p.rx) - p.x}px" style:grid-template-columns={cols([...p.bigs.map((q) => q.x), p.rx])}>
          {#each p.bigs as q}
            {#if q.side}
              <div class="side">{@render icon('tri')}</div>
            {:else}
              <div class="big" class:pressed={q.on} class:tight={q.tight} style:width="{q.w}px">
                <div class="pic">{@render icon(q.icon)}</div>
                {#each q.lines as [text, w]}
                  <div class="line">{@render label(text, w)}</div>
                {/each}
                {#if q.tri}<div class="drop">{@render icon('tri')}</div>{/if}
              </div>
            {/if}
          {/each}
          <div class="rows">
            {#each p.rows as r}
              <div class="row" style:height="{p.pitch ?? 41.3}px">{@render strip(r, p.rx)}</div>
            {/each}
          </div>
        </div>
        <div class="ptitle">
          <div class="pname">
            {@render label(p.title, p.tw)}
            {#if p.tri}{@render icon('triB')}{/if}
          </div>
          {#if p.launch}<div class="launch">{@render icon('launch')}</div>{/if}
        </div>
      </div>
    {/each}
  </section>

  <div class="files">
    <div class="ftab first">
      <svg class="shape" viewBox="0 0 256 40"><defs><linearGradient id="ft" x2="0" y2="1"><stop stop-color="#666" /><stop offset="1" stop-color="#505050" /></linearGradient></defs><path d="M0 40C18 39 24 32 28 18C31 6 35 1 44 1H226C238 1 242 10 246 24C248 34 250 40 256 40Z" fill="url(#ft)" stroke="#6c6c6c" stroke-width="1.500" /></svg>
      {@render label('Start', 42, 'dim')}
    </div>
    <div class="ftab second">
      <svg class="shape" viewBox="0 0 356 40"><defs><linearGradient id="fa" x2="0" y2="1"><stop stop-color="#8c8c8c" /><stop offset="1" stop-color="#595959" /></linearGradient></defs><path d="M0 40C12 38 14 26 17 15C20 4 24 1 30 1H317C326 1 330 8 333 17C337 31 340 38 356 40Z" fill="url(#fa)" stroke="#808080" stroke-width="1.500" /></svg>
      {@render label('Aluminium Ortek MCK-84*', 246)}
      {@render icon('close')}
    </div>
    <div class="fplus">
      <svg class="shape" viewBox="0 0 40 28"><path d="M1 1H28C35 3 38 14 38 26H16C6 24 2 14 1 1Z" fill="#525252" stroke="#6c6c6c" stroke-width="1.500" /></svg>
      {@render icon('plus')}
    </div>
  </div>
  <div class="rule"></div>

  <main class="view">
    <div class="vhead">
      <div class="vlabel"><span>[</span><i></i><span>]</span><span class="vname" use:fit={133}>[Top][Realistic]</span></div>
      <div class="docwin">{@render icon('dmin')}{@render icon('drest')}{@render icon('dclose')}</div>
    </div>

    <svg class="canvas" viewBox="0 301 3840 1741" width="3840" height="1741">
      <defs>
        <radialGradient id="metal" gradientUnits="userSpaceOnUse" cx="0" cy="0" r="760" gradientTransform="translate(1831 1600) scale(1 2.75)">
          <stop offset=".508" stop-color="#fff" />
          <stop offset=".528" stop-color="#ffffd8" />
          <stop offset=".579" stop-color="#ffff98" />
          <stop offset=".641" stop-color="#ffff5c" />
          <stop offset=".668" stop-color="#ffbe48" />
          <stop offset=".697" stop-color="#bb8e36" />
          <stop offset=".724" stop-color="#8f6b2a" />
          <stop offset=".78" stop-color="#5a441a" />
          <stop offset=".866" stop-color="#2e220d" />
          <stop offset=".925" stop-color="#1a1206" />
        </radialGradient>
        <linearGradient id="ux"><stop stop-color="#9c4f50" /><stop offset=".5" stop-color="#de7c7c" /><stop offset="1" stop-color="#a85556" /></linearGradient>
        <linearGradient id="uy" x2="0" y2="1"><stop stop-color="#2f7a2f" /><stop offset=".4" stop-color="#5ab254" /><stop offset="1" stop-color="#2c6b2a" /></linearGradient>
      </defs>

      <rect x="1172.500" y="943" width="1316.500" height="654" rx="29" fill="url(#metal)" />
      <path d="M1196 1597.300H2466" stroke="#000" stroke-width="1.400" />
      {#each [1336.5, 2323.5] as hx}
        {#each [1025.5, 1515] as hy}
          <circle cx={hx} cy={hy} r="7.500" fill="#212830" />
        {/each}
      {/each}
      <g fill="none" stroke="#f08000" stroke-width="1.300">
        <circle cx="1830.500" cy="1270.500" r="25.500" />
        <path d="M1793 1270.500H1868M1830.500 1233V1308" />
      </g>

      <path d="M2727 1527.500H2792M2803 1527.500H2940" stroke="#86e286" stroke-width="1.200" />
      <path d="M2797.500 1385V1522M2797.500 1533V1598" stroke="#e87878" stroke-width="1.200" />
      <rect x="2792.500" y="1522.500" width="10" height="10" fill="none" stroke="#fff" stroke-width="1.200" />

      <path d="M3410 1155L3431 1176M3431 1155L3410 1176" stroke="#d93636" stroke-width="1" />
      <path d="M3421 1241.500H3432L3421 1252" stroke="#0a5ff0" stroke-width="1" fill="none" />
      <path d="M3493 1237L3504 1248L3515 1237M3504.500 1248V1258" stroke="#16b416" stroke-width="1" fill="none" />
      <path d="M3410.500 1180H3421V1268H3410.500Z" fill="url(#ux)" />
      <path d="M3411 1180L3415.500 1176L3420 1180Z" fill="#a34a4a" />
      <path d="M3416 1259H3500L3504 1264L3500 1269H3416Z" fill="url(#uy)" />
      <path d="M3411 1264H3416V1269H3411Z" fill="#4a86d8" />
      <path d="M3411 1269H3420L3416 1273Z" fill="#2c4c70" />

      <circle cx="3699" cy="483" r="94" fill="none" stroke="#454c53" stroke-width="23" />
      <rect x="3655" y="439" width="88" height="88" fill="#acafb1" stroke="#70767a" stroke-width="2" />
      <rect x="3671" y="455" width="56" height="56" fill="#9ea4a9" />
      <text class="top" x="3699" y="492" text-anchor="middle" textLength="38" lengthAdjust="spacingAndGlyphs">TOP</text>
      <g class="compass" text-anchor="middle">
        <text x="3699" y="399">N</text>
        <text x="3699" y="596">S</text>
        <text x="3601" y="497">W</text>
        <text x="3797.500" y="497">E</text>
      </g>
      <rect x="3688" y="636" width="23" height="11" rx="3" fill="#4a5056" />
      <text class="wcs" x="3699.500" y="645" text-anchor="middle" textLength="19" lengthAdjust="spacingAndGlyphs">WCS</text>
      <rect x="3642" y="650.500" width="114" height="27" rx="6" fill="#9598a4" stroke="#7e828e" stroke-width="2" />
      <text class="ucsname" x="3647" y="670" textLength="77" lengthAdjust="spacingAndGlyphs">Unnamed</text>
      <path d="M3735 660H3749L3742 667Z" fill="#a9adb8" stroke="#7e828e" />

      <rect x="3785.500" y="726.500" width="53" height="358" rx="4" fill="#5a5f66" stroke="#6a7076" stroke-width="1.500" />
      <g fill="none" stroke="#42484f" stroke-width="2">
        <rect x="3822" y="728" width="13" height="13" rx="6" fill="#4d5355" stroke="none" />
        <path d="M3825 731L3832 738M3832 731L3825 738" stroke="#6b7074" stroke-width="1.500" />
        <path d="M3812 754H3827Q3831 754 3831 758V772A19 19 0 1 1 3812 754Z" />
        <circle cx="3812" cy="773" r="10" />
        <path d="M3805 780L3799 786M3819 780L3825 786" />
        <path d="M3788 819H3835M3788 1007H3835" stroke="#6a7076" stroke-width="1" />
        <path d="M3803 866C3798 858 3795 852 3791 849Q3792 845 3798 848L3803 852L3801 833Q3804 826 3807 833L3810 843V830Q3813 824 3816 830V843L3820 831Q3825 828 3824 835L3822 847L3827 840Q3832 838 3830 844L3821 862Q3819 867 3816 867Z" />
        <path d="M3793 878L3817 902M3817 878L3793 902M3791 884V876H3799M3811 876H3819V884M3791 896V904H3799" />
        <circle cx="3818" cy="903" r="9" />
        <path d="M3825 910L3832 916" stroke-width="5" />
        <path d="M3807 979V952H3803L3811 943L3819 952H3814V979ZM3807 959Q3791 961 3791 966Q3799 971 3820 969Q3831 967 3831 963Q3828 959 3815 958" />
        <path d="M3791 1015H3802V1026H3791ZM3805 1015H3816V1026H3805ZM3819 1015H3830V1026H3819ZM3791 1032H3820V1054H3791Z" />
        <circle cx="3829" cy="1074" r="6" fill="#4d5355" stroke="none" />
        <path d="M3825 1074H3833" stroke-width="1.500" />
      </g>
      <g fill="#42484f">
        <path d="M3807 806H3817L3812 811ZM3807 928H3817L3812 933ZM3807 994H3817L3812 999ZM3796 970L3803 963V977ZM3799 1036L3812 1043L3799 1050Z" />
      </g>
    </svg>

    <div class="console">
      <div class="hist dimmed"><span use:fit={101}>Command:</span></div>
      <div class="hist"><span use:fit={310}>Command: _.erase 1 found</span></div>
      <div class="cmd">
        <div class="handle">{@render icon('grip')}{@render icon('cx')}{@render icon('wrench')}</div>
        <div class="entry">
          <div class="typed">
            {@render icon('prompt')}{@render icon('triD')}
            <span class="hint" use:fit={180}>Type a command</span>
          </div>
          {@render icon('up')}
        </div>
      </div>
    </div>
  </main>

  <footer class="foot">
    <div class="layouts">
      {#each layouts as t}
        <div class="lay" class:active={t.on}>
          <svg class="shape" viewBox="0 0 122 32" preserveAspectRatio="none"><defs><linearGradient id="l{t.label}" x2="0" y2="1"><stop stop-color={t.on ? '#5a5a5a' : '#4c4c4c'} /><stop offset="1" stop-color={t.on ? '#848484' : '#5c5c5c'} /></linearGradient></defs><path d="M0 0C12 1 13 10 15 18C17 28 19 30 23 31H101C107 30 109 26 111 17C113 8 115 1 122 0Z" fill="url(#l{t.label})" stroke="#6c6c6c" stroke-width="1.200" /></svg>
          {@render label(t.label, t.tw)}
        </div>
      {/each}
      <div class="lplus">
        <svg class="shape" viewBox="0 0 42 30"><path d="M1 28C2 12 6 1 16 1H41C41 14 38 26 28 28Z" fill="#505050" stroke="#6c6c6c" stroke-width="1.200" /></svg>
        {@render icon('plus')}
      </div>
    </div>
    <div class="status">
      {#each status as s}
        <div class="sbox" style:width="{s.e - s.x}px">{@render strip(s.items, s.x)}</div>
      {/each}
    </div>
  </footer>
</div>

<style>
  :global(body) { margin: 0; background: #212830; }
  .app {
    position: relative; width: 3840px; height: 2090px; overflow: hidden;
    display: flex; flex-direction: column; background: #212830;
    font: 19.5px/28px 'Open Sans', 'Noto Sans', sans-serif; color: #f2f2f2;
  }
  .ic { display: block; flex: none; overflow: visible; }
  .label { display: inline-block; white-space: pre; }
  .label.dark { color: #111; margin-right: -1px; }
  .label.dim { color: #adadad; }
  .label.ital { font-style: italic; color: #cfcfcf; }
  .label.bright { color: #fff; }
  .strip { display: grid; align-items: center; justify-items: start; height: 100%; box-sizing: border-box; }

  .titlebar { display: flex; height: 39px; flex: none; background: #fff; border-bottom: 2px solid #2b2b2b; }
  .quick { width: 459px; margin-left: 68px; background: linear-gradient(#a2a2a2, #5f5f5f); border-bottom: 1px solid #888; box-sizing: border-box; }
  .doc { flex: 1; display: flex; gap: 24px; padding: 5px 0 0 753px; }
  .info { width: 781px; background: linear-gradient(#a0a0a0, #5c5c5c); }
  .wins { width: 286px; }
  .search { background: #757575; box-shadow: inset 0 0 0 2px #333; margin-bottom: 3px; }
  .search .label { margin-top: -2px; }
  .logo {
    position: absolute; left: 0; top: 0; width: 68px; height: 68px; box-sizing: border-box;
    display: flex; gap: 5px; padding: 1px 0 0 4px;
    background: linear-gradient(#bdbdbd, #6c6c6c); border-right: 2px solid #222; border-bottom: 2px solid #222;
  }
  .logo .ic + .ic { margin-top: 27px; }
  .logo .ic:first-child { width: 42px; height: 47px; }

  .tabs { display: flex; height: 34px; flex: none; background: #545454; border-bottom: 2px solid #2b2b2b; padding-left: 80px; color: #d2d2d2; }
  .tab { padding-top: 6px; margin-left: 37px; height: 28px; }
  .tab .label { margin-right: -2px; }
  .tab.home { margin: 4px -16px 0 0; padding: 2px 0 0 16px; width: 77px; background: linear-gradient(#767676, #606060); box-shadow: inset 0 0 0 1px #333; border-radius: 3px 3px 0 0; color: #f4f4f4; }
  .tab.home + .tab { margin-left: 36px; }
  .toggle { display: flex; align-items: center; gap: 10px; margin-left: 56px; }

  .ribbon { display: flex; height: 171px; flex: none; background: linear-gradient(#4c4c4c, #383838); border-bottom: 2px solid #8c8c8c; }
  .panel { display: flex; flex-direction: column; background: #5d5d5d; box-shadow: inset -2px 0 #424242, inset 0 -1px #383838; }
  .body { display: grid; height: 138px; flex: none; align-items: start; justify-items: start; }
  .big { display: flex; flex-direction: column; align-items: center; height: 126px; margin-top: 6px; padding-top: 7px; box-sizing: border-box; }
  .big.pressed { background: linear-gradient(#8daede, #50678f); box-shadow: inset 0 0 0 2px #2e3d66; }
  .pic { display: grid; place-items: center; height: 56px; margin-bottom: 7px; flex: none; }
  .big.tight .pic { margin-bottom: 4px; }
  .line { height: 30px; line-height: 30px; flex: none; }
  .line .label { margin-right: -2px; }
  .drop { margin-top: 3px; }
  .side { padding-top: 101px; }
  .rows { display: flex; flex-direction: column; padding-top: 8.5px; }
  .row { flex: none; }
  .row .label { padding-top: 1px; }
  .combo { background: linear-gradient(#757575, #515151); box-shadow: inset 0 0 0 2px #333; }
  .on { background: linear-gradient(#8daede, #50678f); box-shadow: inset 0 0 0 2px #2e3d66; }
  .lit { background: #5e8cc2; }
  .ptitle { display: flex; height: 30px; margin: 0 3px 0 2px; background: linear-gradient(#525252, #454545); }
  .pname { flex: 1; display: flex; justify-content: center; align-items: center; gap: 9px; padding: 7px 0 0 2px; height: 23px; line-height: 23px; }
  .pname .ic { margin-top: -7px; }
  .launch { width: 17px; padding-top: 12px; }
  .touch .ptitle { background: linear-gradient(#5d5d5d, #363636 85%, #1f628f); }

  .files { display: flex; height: 43px; flex: none; background: #373737; border-bottom: 3px solid #5c5c5c; }
  .ftab { position: relative; display: flex; box-sizing: border-box; height: 40px; margin-top: 3px; padding-top: 9px; }
  .shape { position: absolute; left: 0; top: 0; width: 100%; height: 100%; }
  .ftab .label, .ftab .ic, .fplus .ic, .lay .label, .lplus .ic { position: relative; }
  .first { width: 256px; padding-left: 52px; }
  .first .shape { left: 8px; width: 246px; }
  .second { width: 356px; margin-left: -20px; padding-left: 32px; gap: 17px; }
  .second .ic { margin-top: 4px; }
  .second .shape, .first .shape { height: 40px; }
  .fplus { position: relative; width: 40px; height: 28px; margin: 11px 0 0 -13px; display: grid; place-items: center; }
  .rule { height: 4px; flex: none; background: #5c5c5c; border-top: 1px solid #000; }

  .view { position: relative; height: 1741px; flex: none; display: flex; flex-direction: column; justify-content: space-between; }
  .canvas { position: absolute; left: 0; top: 0; }
  .vhead { position: relative; display: flex; justify-content: space-between; padding: 7px 11px 0 0; }
  .vlabel { display: flex; }
  .vlabel i { width: 12px; height: 2px; margin: 10px 3px 0 1px; background: #f2f2f2; }
  .vname { display: inline-block; white-space: pre; margin-left: -1px; }
  .docwin { display: flex; gap: 19px; padding-top: 6px; }
  .docwin .ic:first-child { margin-top: 10px; }
  .top { font: 900 25px Lato, sans-serif; fill: #50555e; }
  .compass { font: bold 38px 'Liberation Sans', sans-serif; fill: #b4b6b8; }
  .wcs { font: 9px 'Liberation Sans', sans-serif; fill: #8f9499; }
  .ucsname { font: 17.5px 'Liberation Sans', sans-serif; fill: #50545c; }

  .console { position: relative; margin-left: 722px; width: 2395px; font-family: 'DejaVu Sans Mono', monospace; font-size: 20px; }
  .hist { margin: 0 0 9px 2065px; width: 318px; height: 27px; line-height: 27px; box-sizing: border-box; padding-left: 4px; background: #5e5e5e; border-radius: 3px; white-space: pre; }
  .hist span, .hint { display: inline-block; white-space: pre; }
  .hist.dimmed { width: 110px; background: #55575a; color: #bcbcbc; }
  .hist + .cmd { margin-top: -4px; }
  .cmd { display: flex; height: 48px; box-sizing: border-box; border: 2px solid #5c5e60; border-radius: 5px; }
  .handle { width: 92px; flex: none; display: flex; align-items: center; gap: 15px; padding-left: 11px; box-sizing: border-box; background: linear-gradient(#6e6e6e, #383838); }
  .entry { flex: 1; display: flex; justify-content: space-between; align-items: center; padding: 0 5px 0 9px; background: linear-gradient(#bdbec0, #c0c1c3); }
  .typed { display: flex; align-items: center; gap: 6px; }
  .hint { margin-left: 7px; font-style: italic; color: #77797c; }

  .foot { display: flex; justify-content: space-between; height: 46px; background: #363636; border-top: 2px solid #5c5c5c; }
  .layouts { display: flex; height: 30px; padding-left: 7px; color: #b4b4b4; }
  .lay { position: relative; width: 120px; display: flex; justify-content: center; padding-top: 2px; box-sizing: border-box; margin-right: -8px; }
  .lay.active { z-index: 1; font-weight: bold; color: #fff; }
  .lplus { position: relative; width: 42px; height: 29px; margin-left: 13px; display: grid; place-items: center; }
  .status { display: flex; }
  .sbox { height: 46px; box-sizing: border-box; background: #505050; box-shadow: inset 0 0 0 2px #7b7b7b; }
</style>
